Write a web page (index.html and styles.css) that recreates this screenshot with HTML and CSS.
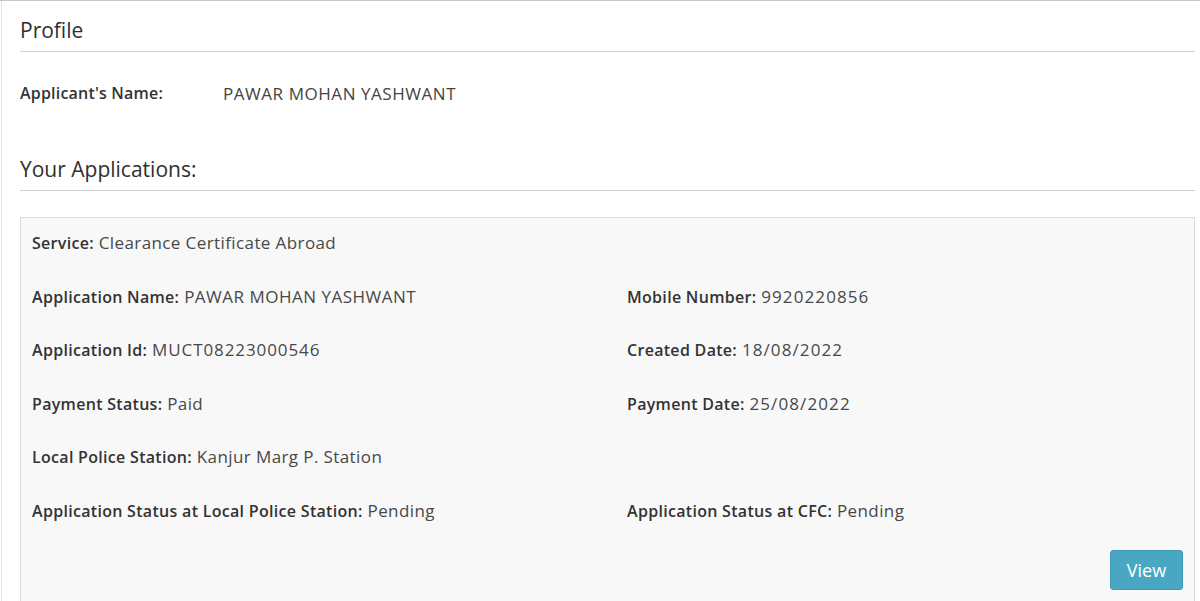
FILE: index.html
```html
<!DOCTYPE html>
<html>
<head>
<meta charset="utf-8">
<link rel="stylesheet" href="styles.css">
</head>
<body>
<div class="panel">
  <h2 class="section-title">Profile</h2>
  <div class="applicant">
    <span class="applicant-label">Applicant's Name:</span>
    <span class="applicant-value">PAWAR MOHAN YASHWANT</span>
  </div>
  <h2 class="section-title apps-title">Your Applications:</h2>
  <div class="card">
    <div class="grid">
      <div class="item full"><b>Service:</b> Clearance Certificate Abroad</div>
      <div class="item"><b>Application Name:</b> <span class="caps">PAWAR MOHAN YASHWANT</span></div>
      <div class="item"><b>Mobile Number:</b> <span class="num">9920220856</span></div>
      <div class="item"><b>Application Id:</b> <span class="num id">MUCT08223000546</span></div>
      <div class="item"><b>Created Date:</b> <span class="num">18/08/2022</span></div>
      <div class="item"><b>Payment Status:</b> Paid</div>
      <div class="item"><b>Payment Date:</b> <span class="num">25/08/2022</span></div>
      <div class="item full"><b>Local Police Station:</b> Kanjur Marg P. Station</div>
      <div class="item"><b>Application Status at Local Police Station:</b> Pending</div>
      <div class="item"><b>Application Status at CFC:</b> Pending</div>
    </div>
    <div class="actions"><button class="btn-view">View</button></div>
  </div>
</div>
</body>
</html>
```
FILE: styles.css
```css
html, body {
  margin: 0;
  padding: 0;
  background: #fff;
}
body {
  font-family: "Open Sans", Lato, sans-serif;
  color: #333;
  height: 601px;
  overflow: hidden;
  border-top: 1px solid #c8c8c8;
  box-sizing: border-box;
}
.panel {
  margin-left: 1px;
  border-left: 1px solid #e2e2e2;
  padding: 0 5px 0 18px;
  height: 600px;
}
.section-title {
  margin: 0;
  font-size: 21px;
  font-weight: 500;
  color: #2f2f2f;
  line-height: 30px;
  padding-top: 14px;
  padding-bottom: 6px;
  border-bottom: 1px solid #cfcfcf;
}
.applicant {
  display: flex;
  align-items: center;
  height: 30px;
  margin-top: 26px;
}
.applicant-label {
  width: 203px;
  font-size: 16px;
  font-weight: 600;
  letter-spacing: 0.2px;
  color: #333;
}
.applicant-value {
  font-size: 17px;
  letter-spacing: 0.55px;
  color: #444;
}
.apps-title {
  margin-top: 46px;
  padding-top: 0;
}
.card {
  margin-top: 26px;
  background: #f8f8f8;
  border: 1px solid #dcdcdc;
  border-bottom: none;
  padding: 10px 11px 0 11px;
  height: 400px;
}
.grid {
  display: grid;
  grid-template-columns: 595px 1fr;
  row-gap: 23.6px;
  font-size: 17px;
  letter-spacing: 0.4px;
  color: #484848;
}
.item {
  line-height: 30px;
}
.item b {
  font-size: 16px;
  font-weight: 600;
  letter-spacing: 0.3px;
  color: #333;
}
.num {
  letter-spacing: 1.1px;
}
.id {
  letter-spacing: 0.9px;
}
.caps {
  letter-spacing: 0.5px;
}
.full {
  grid-column: 1 / -1;
}
.actions {
  display: flex;
  justify-content: flex-end;
  margin-top: 24px;
}
.btn-view {
  font-family: inherit;
  font-size: 18px;
  color: #fff;
  background: #4aa7c3;
  border: 1px solid #3e9cb8;
  border-radius: 3px;
  width: 73px;
  height: 40px;
  margin-right: 0;
}
```
